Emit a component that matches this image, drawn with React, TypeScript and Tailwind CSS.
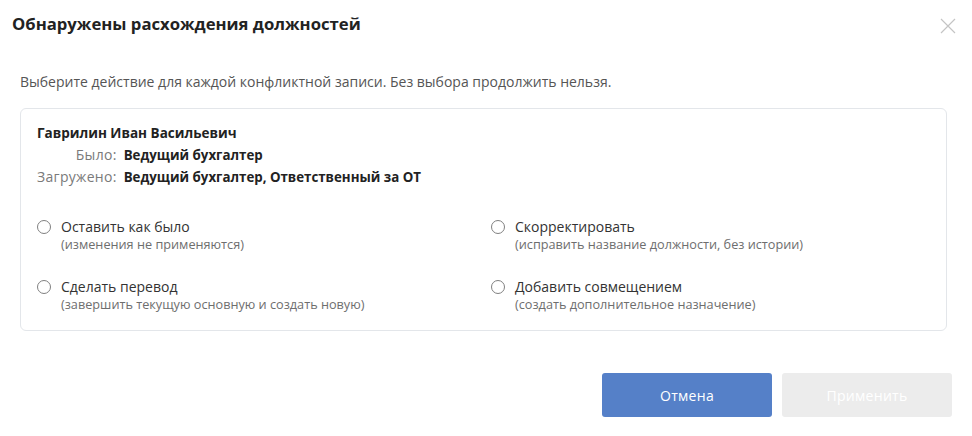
import React from "react";

const options = [
  { t: "Оставить как было", s: "(изменения не применяются)" },
  { t: "Скорректировать", s: "(исправить название должности, без истории)" },
  { t: "Сделать перевод", s: "(завершить текущую основную и создать новую)" },
  { t: "Добавить совмещением", s: "(создать дополнительное назначение)" },
];

export default function App() {
  return (
    <div
      className="w-[972px] h-[436px] bg-white relative text-[#333]"
      style={{ fontFamily: "'Open Sans', 'Noto Sans', sans-serif" }}
    >
      <div className="flex items-start justify-between pl-3 pr-2 pt-[13px]">
        <h1 className="text-[16.7px] leading-[22px] font-bold text-[#222]">
          Обнаружены расхождения должностей
        </h1>
        <button className="w-[20px] h-[20px] mt-[3px] mr-[6px] flex items-center justify-center">
          <svg width="18" height="18" viewBox="0 0 18 18">
            <path d="M2 2L16 16M16 2L2 16" stroke="#c4c4c4" strokeWidth="1.2" />
          </svg>
        </button>
      </div>
      <div className="pl-5 pr-[25px]">
        <p className="mt-[38px] text-[14px] leading-[16px] text-[#555]">
          Выберите действие для каждой конфликтной записи. Без выбора продолжить нельзя.
        </p>
        <div className="mt-[18px] h-[223px] border border-[#e3e6ea] rounded-[6px] pl-4 pr-4 pt-[16px]">
          <div className="text-[13.5px] leading-[16px] font-bold text-[#222]">Гаврилин Иван Васильевич</div>
          <div className="grid grid-cols-[auto_1fr] gap-x-[7px] gap-y-[6px] mt-[6px] leading-[16px]">
            <span className="text-right text-[14px] tracking-[0.3px] text-[#7a7a7a]">Было:</span>
            <span className="text-[13.3px] font-bold text-[#222]">Ведущий бухгалтер</span>
            <span className="text-right text-[14px] tracking-[0.3px] text-[#7a7a7a]">Загружено:</span>
            <span className="text-[13.3px] font-bold text-[#222]">Ведущий бухгалтер, Ответственный за ОТ</span>
          </div>
          <div className="grid grid-cols-[454px_1fr] gap-y-[28px] mt-[34px]">
            {options.map((o) => (
              <label key={o.t} className="flex items-start gap-[10px]">
                <span className="mt-[1px] w-[14px] h-[14px] rounded-full border border-[#7f7f7f] bg-white shrink-0" />
                <span className="flex flex-col">
                  <span className="text-[14px] leading-[16px] text-[#333]">{o.t}</span>
                  <span className="text-[12.7px] leading-[14px] mt-[2px] text-[#6e6e6e]">{o.s}</span>
                </span>
              </label>
            ))}
          </div>
        </div>
      </div>
      <div className="flex justify-end gap-[10px] pr-5 mt-[42px]">
        <button className="w-[170px] h-[44px] rounded-[3px] bg-[#5580c8] text-white text-[14px] font-medium tracking-[0.3px]">
          Отмена
        </button>
        <button className="w-[170px] h-[44px] rounded-[3px] bg-[#ececec] text-white text-[14px] font-medium tracking-[0.3px]">
          Применить
        </button>
      </div>
    </div>
  );
}
